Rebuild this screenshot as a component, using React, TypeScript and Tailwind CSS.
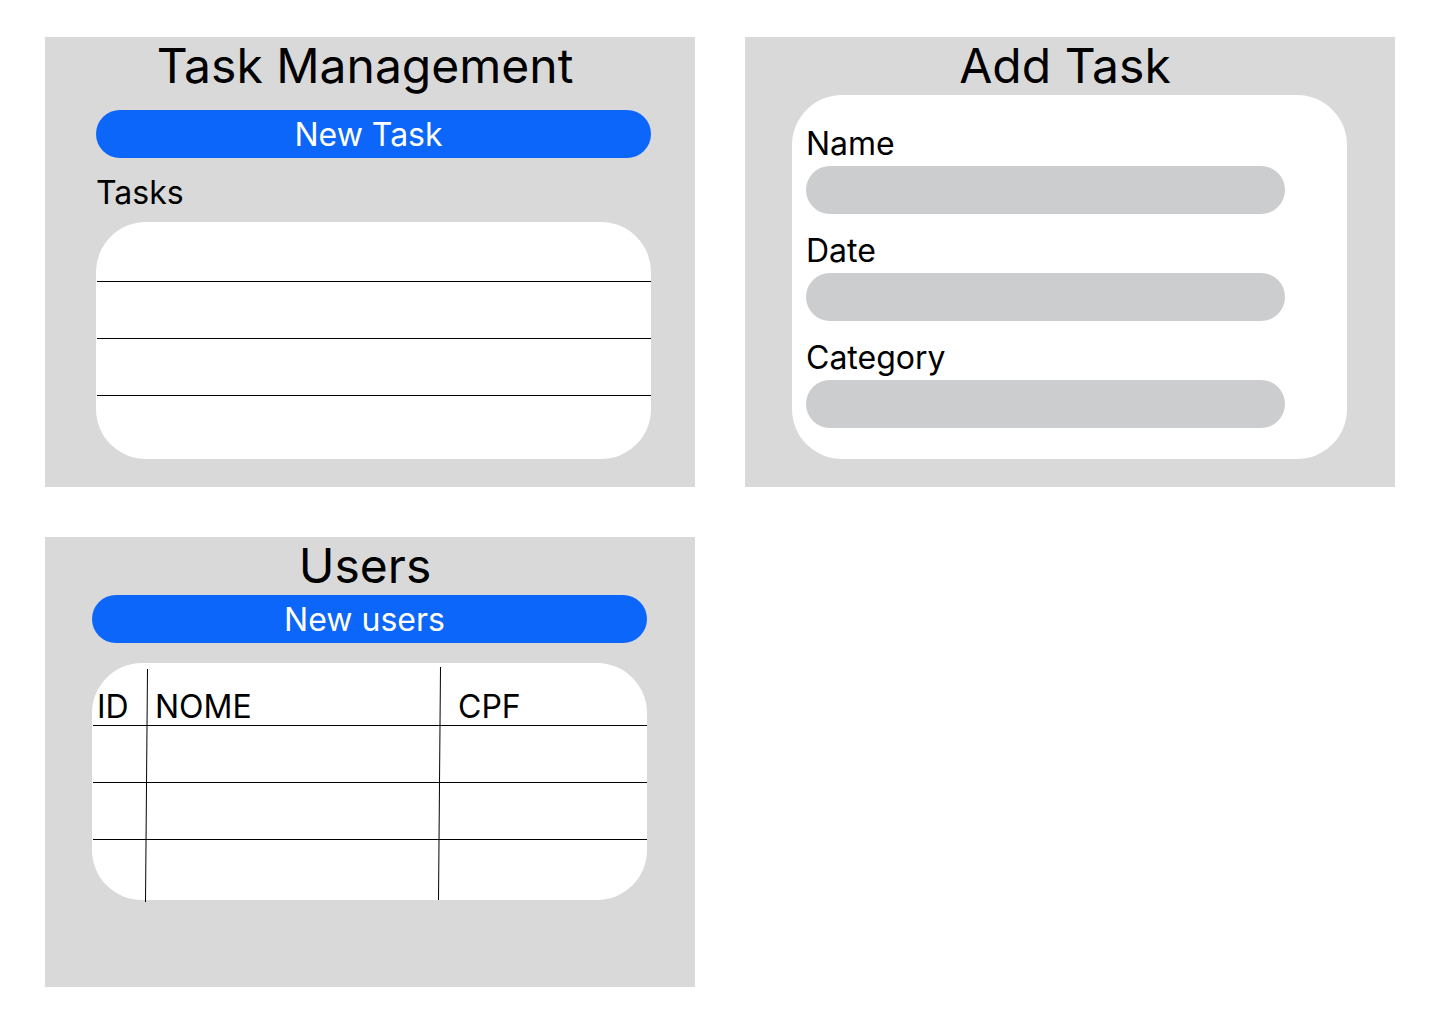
import type { ReactNode } from "react";

function Card({ title, children }: { title: string; children: ReactNode }) {
  return (
    <section className="flex flex-col bg-[#d9d9d9]">
      <h2 className="pr-2.5 text-center text-[48px] leading-[58px]">{title}</h2>
      {children}
    </section>
  );
}

function PillButton({ children }: { children: ReactNode }) {
  return (
    <button
      type="button"
      className="h-12 w-full rounded-full bg-[#0c66fa] pr-2.5 text-center text-[32px] leading-[39px] text-white"
    >
      {children}
    </button>
  );
}

function Field({ id, label }: { id: string; label: string }) {
  return (
    <div className="flex flex-col gap-[3px]">
      <label htmlFor={id} className="text-[32px] leading-[39px]">
        {label}
      </label>
      <input
        id={id}
        type="text"
        className="h-12 w-full rounded-full bg-[#cccdcf] px-6 text-2xl outline-none"
      />
    </div>
  );
}

function TaskManagement() {
  return (
    <Card title="Task Management">
      <div className="pt-[15px] pr-11 pb-7 pl-[51px]">
        <PillButton>New Task</PillButton>
        <h3 className="mt-[15px] text-[32px] leading-[39px]">Tasks</h3>
        <ul className="mt-2.5 rounded-[50px] bg-white pl-px">
          <li className="h-15 border-b border-black" />
          <li className="h-[57px] border-b border-black" />
          <li className="h-[57px] border-b border-black" />
          <li className="h-[63px]" />
        </ul>
      </div>
    </Card>
  );
}

function AddTask() {
  return (
    <Card title="Add Task">
      <form className="mr-12 mb-7 ml-[47px] flex flex-col gap-[17px] rounded-[50px] bg-white pt-[29px] pr-[62px] pb-[31px] pl-3.5">
        <Field id="task-name" label="Name" />
        <Field id="task-date" label="Date" />
        <Field id="task-category" label="Category" />
      </form>
    </Card>
  );
}

function Users() {
  const cell = "border-b border-black";
  return (
    <Card title="Users">
      <div className="pr-12 pb-[87px] pl-[47px]">
        <PillButton>New users</PillButton>
        <div className="relative mt-5 rounded-[50px] bg-white pl-px">
          <table className="w-full table-fixed border-separate border-spacing-0 text-left text-[32px] leading-8">
            <colgroup>
              <col className="w-[60px]" />
              <col className="w-[301px]" />
              <col />
            </colgroup>
            <thead>
              <tr>
                <th scope="col" className="border-b border-black pt-7 pb-0.5 pl-1 font-normal">
                  ID
                </th>
                <th scope="col" className="border-b border-black pt-7 pb-0.5 pl-0.5 font-normal">
                  NOME
                </th>
                <th scope="col" className="border-b border-black pt-7 pb-0.5 pl-1 font-normal">
                  CPF
                </th>
              </tr>
            </thead>
            <tbody>
              <tr className="h-[57px]">
                <td className={cell} />
                <td className={cell} />
                <td className={cell} />
              </tr>
              <tr className="h-[57px]">
                <td className={cell} />
                <td className={cell} />
                <td className={cell} />
              </tr>
              <tr className="h-15">
                <td />
                <td />
                <td />
              </tr>
            </tbody>
          </table>
          <svg
            className="pointer-events-none absolute inset-0 h-full w-full overflow-visible"
            aria-hidden="true"
            stroke="black"
            strokeWidth="1"
          >
            <line x1="55.5" y1="6" x2="53.5" y2="239" />
            <line x1="348.5" y1="4" x2="346.5" y2="237" />
          </svg>
        </div>
      </div>
    </Card>
  );
}

export default function App() {
  return (
    <main className="grid grid-cols-1 items-start gap-[50px] bg-white px-[45px] py-[37px] font-['Inter',sans-serif] text-black lg:grid-cols-2">
      <TaskManagement />
      <AddTask />
      <Users />
    </main>
  );
}
